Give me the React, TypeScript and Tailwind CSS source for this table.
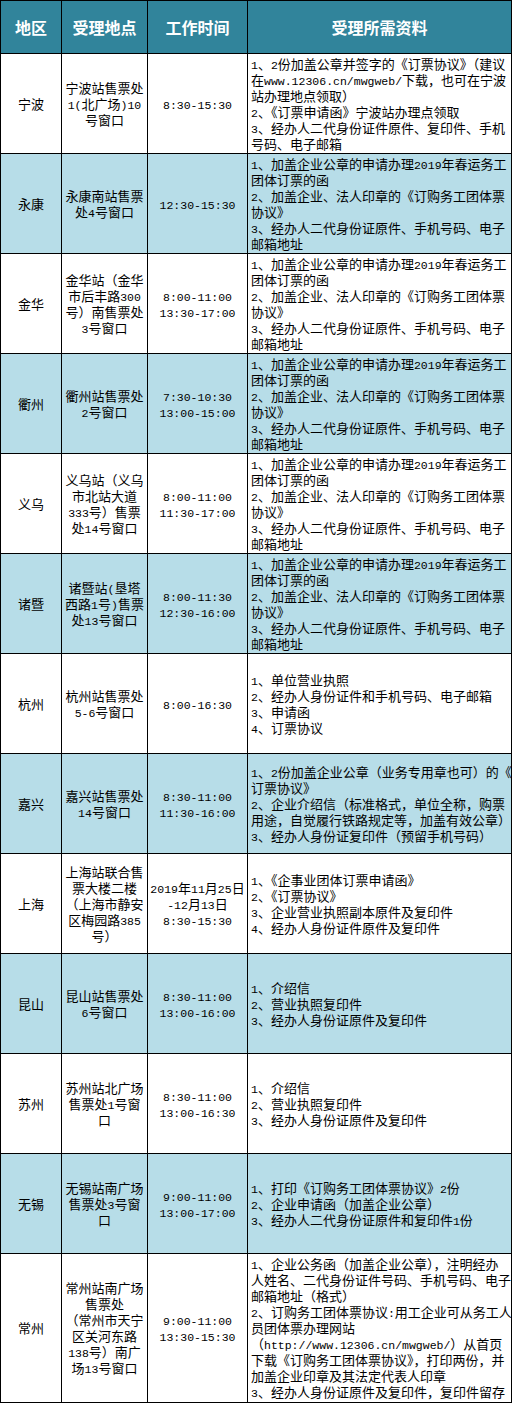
import React from 'react';

type Row = {
  area: string;
  place: string[];
  time: string[];
  docs: string[];
  tall?: boolean;
};

const standard = [
  '1、加盖企业公章的申请办理2019年春运务工',
  '团体订票的函',
  '2、加盖企业、法人印章的《订购务工团体票',
  '协议》',
  '3、经办人二代身份证原件、手机号码、电子',
  '邮箱地址',
];

const intro = ['1、介绍信', '2、营业执照复印件', '3、经办人身份证原件及复印件'];

const rows: Row[] = [
  {
    area: '宁波',
    place: ['宁波站售票处', '1(北广场)10', '号窗口'],
    time: ['8:30-15:30'],
    docs: [
      '1、2份加盖公章并签字的《订票协议》（建议',
      '在www.12306.cn/mwgweb/下载，也可在宁波',
      '站办理地点领取）',
      '2、《订票申请函》宁波站办理点领取',
      '3、经办人二代身份证件原件、复印件、手机',
      '号码、电子邮箱',
    ],
  },
  { area: '永康', place: ['永康南站售票', '处4号窗口'], time: ['12:30-15:30'], docs: standard },
  {
    area: '金华',
    place: ['金华站（金华', '市后丰路300', '号）南售票处', '3号窗口'],
    time: ['8:00-11:00', '13:30-17:00'],
    docs: standard,
  },
  { area: '衢州', place: ['衢州站售票处', '2号窗口'], time: ['7:30-10:30', '13:00-15:00'], docs: standard },
  {
    area: '义乌',
    place: ['义乌站（义乌', '市北站大道', '333号）售票', '处14号窗口'],
    time: ['8:00-11:00', '11:30-17:00'],
    docs: standard,
  },
  {
    area: '诸暨',
    place: ['诸暨站(垦塔', '西路1号)售票', '处13号窗口'],
    time: ['8:00-11:30', '12:30-16:00'],
    docs: standard,
  },
  {
    area: '杭州',
    place: ['杭州站售票处', '5-6号窗口'],
    time: ['8:00-16:30'],
    docs: ['1、单位营业执照', '2、经办人身份证件和手机号码、电子邮箱', '3、申请函', '4、订票协议'],
  },
  {
    area: '嘉兴',
    place: ['嘉兴站售票处', '14号窗口'],
    time: ['8:30-11:00', '11:30-16:00'],
    docs: [
      '1、2份加盖企业公章（业务专用章也可）的《',
      '订票协议》',
      '2、企业介绍信（标准格式，单位全称，购票',
      '用途，自觉履行铁路规定等，加盖有效公章）',
      '3、经办人身份证复印件（预留手机号码）',
    ],
  },
  {
    area: '上海',
    place: ['上海站联合售', '票大楼二楼', '（上海市静安', '区梅园路385', '号）'],
    time: ['2019年11月25日', '-12月13日', '8:30-15:30'],
    docs: ['1、《企事业团体订票申请函》', '2、《订票协议》', '3、企业营业执照副本原件及复印件', '4、经办人身份证件原件及复印件'],
  },
  { area: '昆山', place: ['昆山站售票处', '6号窗口'], time: ['8:30-11:00', '13:00-16:00'], docs: intro },
  { area: '苏州', place: ['苏州站北广场', '售票处1号窗', '口'], time: ['8:30-11:00', '13:00-16:30'], docs: intro },
  {
    area: '无锡',
    place: ['无锡站南广场', '售票处3号窗', '口'],
    time: ['9:00-11:00', '13:00-17:00'],
    docs: ['1、打印《订购务工团体票协议》2份', '2、企业申请函（加盖企业公章）', '3、经办人二代身份证原件和复印件1份'],
  },
  {
    area: '常州',
    place: ['常州站南广场', '售票处', '（常州市天宁', '区关河东路', '138号）南广', '场13号窗口'],
    time: ['9:00-11:00', '13:30-15:30'],
    docs: [
      '1、企业公务函（加盖企业公章），注明经办',
      '人姓名、二代身份证件号码、手机号码、电子',
      '邮箱地址（格式）',
      '2、订购务工团体票协议:用工企业可从务工人',
      '员团体票办理网站',
      '（http://www.12306.cn/mwgweb/）从首页',
      '下载《订购务工团体票协议》，打印两份，并',
      '加盖企业印章及其法定代表人印章',
      '3、经办人身份证原件及复印件，复印件留存',
    ],
    tall: true,
  },
];

// half-width runs get a narrow mono face, like the 宋体 half-width glyphs
const Mixed = ({ text }: { text: string }) => (
  <>
    {text.split(/([\x20-\x7e]+)/).map((part, i) =>
      /^[\x20-\x7e]+$/.test(part) ? (
        <span key={i} className="font-['Liberation_Mono',monospace] text-[11.5px] leading-none">
          {part}
        </span>
      ) : (
        <span key={i}>{part}</span>
      )
    )}
  </>
);

const Lines = ({ lines }: { lines: string[] }) => (
  <>
    {lines.map((l, i) => (
      <div key={i} className="h-4 whitespace-nowrap">
        <Mixed text={l} />
      </div>
    ))}
  </>
);

export default function App() {
  return (
    <div className="w-[514px] bg-white font-['Noto_Sans_CJK_SC',sans-serif] text-[13px] leading-4 text-black">
      <table className="w-[512px] table-fixed border-collapse border border-black">
        <colgroup>
          <col className="w-[61px]" />
          <col className="w-[86px]" />
          <col className="w-[100px]" />
          <col />
        </colgroup>
        <thead>
          <tr className="h-[53px] bg-[#31849b] text-[16px] font-bold text-white">
            <th className="border border-black text-center align-middle">地区</th>
            <th className="border border-black text-center align-middle">受理地点</th>
            <th className="border border-black text-center align-middle">工作时间</th>
            <th className="border border-black text-center align-middle">受理所需资料</th>
          </tr>
        </thead>
        <tbody>
          {rows.map((r, i) => (
            <tr
              key={r.area}
              className={`${r.tall ? 'h-[149px]' : 'h-[100px]'} ${i % 2 === 1 ? 'bg-[#b7dde8]' : 'bg-white'}`}
            >
              <td className="border border-black text-center align-middle">{r.area}</td>
              <td className="border border-black text-center align-middle">
                <Lines lines={r.place} />
              </td>
              <td className="border border-black text-center align-middle">
                <Lines lines={r.time} />
              </td>
              <td className="border border-black pl-[3px] text-left align-middle">
                <Lines lines={r.docs} />
              </td>
            </tr>
          ))}
        </tbody>
      </table>
    </div>
  );
}
